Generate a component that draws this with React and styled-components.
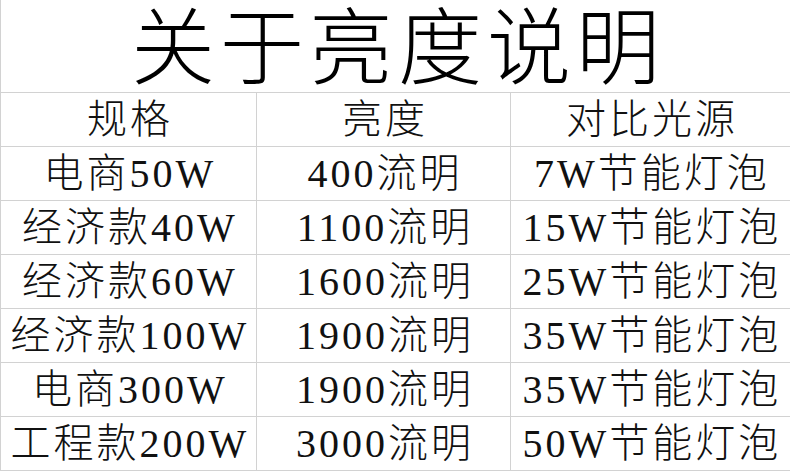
import React from 'react';
import styled, { createGlobalStyle } from 'styled-components';

const rows = [
  ['电商50W', '400流明', '7W节能灯泡'],
  ['经济款40W', '1100流明', '15W节能灯泡'],
  ['经济款60W', '1600流明', '25W节能灯泡'],
  ['经济款100W', '1900流明', '35W节能灯泡'],
  ['电商300W', '1900流明', '35W节能灯泡'],
  ['工程款200W', '3000流明', '50W节能灯泡'],
];

const GlobalStyle = createGlobalStyle`
  html, body {
    margin: 0;
    padding: 0;
    background: #fff;
  }
  body {
    width: 790px;
    height: 473px;
    overflow: hidden;
    font-family: "Liberation Serif", "Noto Sans CJK SC", serif;
    font-weight: 300;
    color: #111;
  }
`;

export default function App() {
  return (
    <>
      <GlobalStyle />
      <Sheet>
        <Title>关于亮度说明</Title>
        <Cell>规格</Cell>
        <Cell>亮度</Cell>
        <Cell $last>对比光源</Cell>
        {rows.map((r, i) => (
          <React.Fragment key={i}>
            <Cell>{r[0]}</Cell>
            <Cell>{r[1]}</Cell>
            <Cell $last>{r[2]}</Cell>
          </React.Fragment>
        ))}
      </Sheet>
    </>
  );
}

const Sheet = styled.div`
  display: grid;
  grid-template-columns: 256px 254px 1fr;
  grid-template-rows: 93px repeat(7, 54px);
  width: 790px;
  border-left: 1px solid #d2d2d2;
  box-sizing: border-box;
`;

const Title = styled.div`
  grid-column: 1 / -1;
  display: flex;
  align-items: center;
  justify-content: center;
  box-sizing: border-box;
  border-bottom: 1px solid #d2d2d2;
  padding-top: 8px;
  font-size: 84px;
  letter-spacing: 5px;
  text-indent: 5px;
  line-height: 1;
  color: #000;
`;

const Cell = styled.div`
  display: flex;
  align-items: center;
  justify-content: center;
  box-sizing: border-box;
  border-bottom: 1px solid #d2d2d2;
  border-right: ${p => (p.$last ? 'none' : '1px solid #d2d2d2')};
  font-size: 40px;
  letter-spacing: 3px;
  text-indent: 3px;
  line-height: 1;
  white-space: nowrap;
`;
